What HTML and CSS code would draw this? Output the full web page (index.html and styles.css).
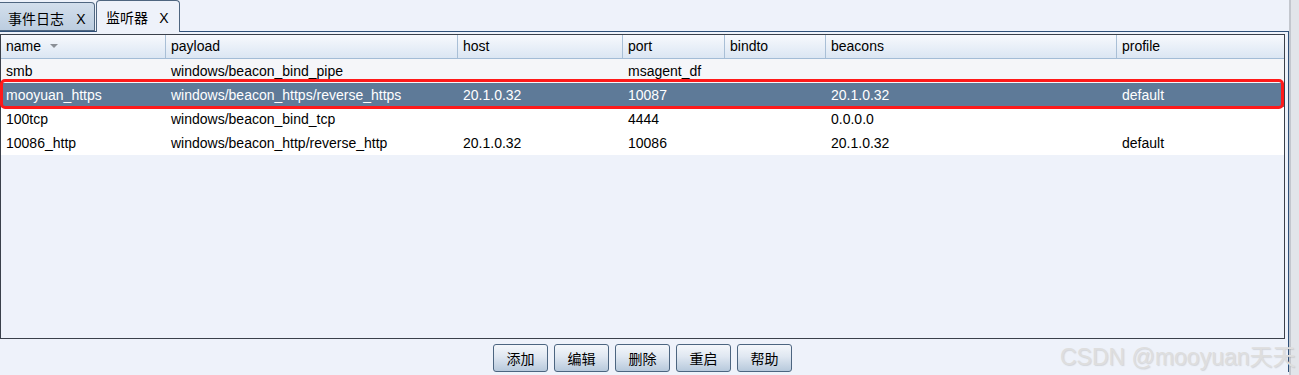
FILE: index.html
```html
<!DOCTYPE html>
<html lang="zh-CN">
<head>
  <meta charset="UTF-8" />
  <title>监听器</title>
  <link rel="stylesheet" href="styles.css">
</head>
<body>
  <div class="window">
    <div class="tabs">
      <div class="tab">事件日志 <span class="close">X</span></div>
      <div class="tab active">监听器 <span class="close">X</span></div>
    </div>

    <div class="tabpane">
      <div class="scroll">
        <div class="grid head">
          <div class="th">name <span class="sort"></span></div>
          <div class="th">payload</div>
          <div class="th">host</div>
          <div class="th">port</div>
          <div class="th">bindto</div>
          <div class="th">beacons</div>
          <div class="th">profile</div>
        </div>
        <div class="grid row alt">
          <div>smb</div><div>windows/beacon_bind_pipe</div><div></div><div>msagent_df</div><div></div><div></div><div></div>
        </div>
        <div class="grid row selected">
          <div>mooyuan_https</div><div>windows/beacon_https/reverse_https</div><div>20.1.0.32</div><div>10087</div><div></div><div>20.1.0.32</div><div>default</div>
        </div>
        <div class="grid row">
          <div>100tcp</div><div>windows/beacon_bind_tcp</div><div></div><div>4444</div><div></div><div>0.0.0.0</div><div></div>
        </div>
        <div class="grid row">
          <div>10086_http</div><div>windows/beacon_http/reverse_http</div><div>20.1.0.32</div><div>10086</div><div></div><div>20.1.0.32</div><div>default</div>
        </div>
        <div class="mark"></div>
      </div>

      <div class="buttons">
        <button>添加</button>
        <button>编辑</button>
        <button>删除</button>
        <button>重启</button>
        <button>帮助</button>
      </div>
    </div>
  </div>
  <div class="edge"></div>
  <div class="watermark">CSDN @mooyuan天天</div>
</body>
</html>
```

FILE: styles.css
```css
html, body {
  margin: 0;
  padding: 0;
  height: 100%;
  overflow: hidden;
  background: #eef2fa;
  font-family: "Liberation Sans", Arial, "Noto Sans CJK SC", sans-serif;
  font-size: 14px;
  color: #000;
}
body {
  display: flex;
}
.window {
  width: 1291px;
  position: relative;
}
.edge {
  width: 8px;
  background: #e2e5ea;
  border-left: 2px solid #c3c7ce;
}
.tabs {
  display: flex;
  align-items: flex-end;
  height: 31px;
}
.tab {
  box-sizing: border-box;
  height: 29px;
  padding: 5px 8px 0 8px;
  width: 95px;
  border: 1px solid #4f6680;
  border-left: none;
  border-radius: 0 4px 0 0;
  background: linear-gradient(#d3dfec, #bccde0);
  font-family: "Noto Sans CJK SC", sans-serif;
  font-size: 14px;
  line-height: 20px;
  white-space: nowrap;
}
.tab.active {
  height: 32px;
  width: 84px;
  margin-left: 1px;
  margin-bottom: -1px;
  border: 1px solid #4f6680;
  border-bottom: none;
  border-radius: 4px 4px 0 0;
  background: #eef2fa;
  padding: 6px 8px 0 9px;
  position: relative;
  z-index: 1;
}
.close {
  font-family: "Liberation Sans", Arial, sans-serif;
  margin-left: 9px;
}
.tab.active .close {
  margin-left: 8px;
}
.tabpane {
  border-top: 1px solid #2f5078;
  border-right: 1px solid #2f5078;
  padding: 2px 3px 0 0;
}
.scroll {
  box-sizing: border-box;
  height: 305px;
  border: 1px solid #3a404a;
  background: #eef2fa;
}
.grid {
  display: grid;
  grid-template-columns: 165px 292px 165px 102px 101px 291px 1fr;
}
.head {
  height: 24px;
  box-sizing: border-box;
  border-bottom: 1px solid #a3bcd6;
  background: linear-gradient(#f7f9fd, #dbe6f3);
}
.th {
  padding-left: 5px;
  line-height: 23px;
  border-right: 1px solid #a9bfd6;
}
.th:last-child {
  border-right: none;
}
.sort {
  display: inline-block;
  width: 0;
  height: 0;
  margin-left: 5px;
  vertical-align: 3px;
  border-left: 4px solid transparent;
  border-right: 4px solid transparent;
  border-top: 4px solid #8a8f96;
}
.row {
  height: 24px;
  line-height: 24px;
  background: #fff;
}
.row.alt {
  background: #f5f6f9;
}
.row div {
  padding-left: 5px;
  white-space: nowrap;
}
.row.selected {
  background: #5e7a98;
  color: #fff;
}
.mark {
  position: absolute;
  left: 0;
  top: 79px;
  width: 1284px;
  height: 30px;
  box-sizing: border-box;
  border: 3px solid #ff1a1a;
  border-radius: 5px;
}
.buttons {
  display: flex;
  justify-content: center;
  gap: 6px;
  padding-top: 5px;
}
.buttons button {
  width: 55px;
  height: 28px;
  padding: 0;
  border: 1px solid #4c6580;
  border-radius: 3px;
  background: linear-gradient(#f4f7fb 0%, #dfe7f1 45%, #b7c9dc 100%);
  font-family: "Noto Sans CJK SC", sans-serif;
  font-size: 14px;
  color: #000;
}
.watermark {
  position: absolute;
  left: 1060px;
  top: 338px;
  font-family: "Liberation Sans", Arial, "Noto Sans CJK SC", sans-serif;
  font-size: 23px;
  color: #dedede;
  text-shadow: 1px 1px 1px rgba(150, 150, 150, 0.3);
  white-space: nowrap;
}
```
